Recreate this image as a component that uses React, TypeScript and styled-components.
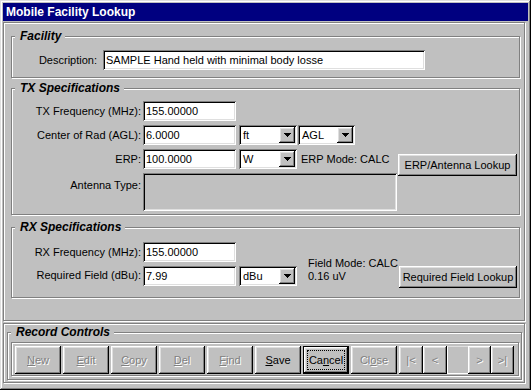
import React from "react";
import styled, { createGlobalStyle, css } from "styled-components";

const GlobalStyle = createGlobalStyle`
  html, body { margin: 0; padding: 0; background: #c0c0c0; }
  body { font-family: "Liberation Sans", Arial, sans-serif; font-size: 11px; color: #000; }
`;

const raised = css`
  box-shadow: inset -1px -1px 0 #000, inset 1px 1px 0 #fff, inset -2px -2px 0 #808080, inset 2px 2px 0 #dfdfdf;
`;

const sunken = css`
  box-shadow: inset 1px 1px 0 #808080, inset -1px -1px 0 #fff, inset 2px 2px 0 #000, inset -2px -2px 0 #dfdfdf;
`;

const etched = css`
  border: 1px solid #808080;
  box-shadow: 1px 1px 0 #fff, inset 1px 1px 0 #fff;
`;

const Window = styled.div`
  width: 531px;
  height: 390px;
  box-sizing: border-box;
  padding: 3px;
  background: #c0c0c0;
  box-shadow: inset -1px -1px 0 #000, inset 1px 1px 0 #dfdfdf, inset -2px -2px 0 #808080, inset 2px 2px 0 #fff;
  display: flex;
  flex-direction: column;
`;

const TitleBar = styled.div`
  height: 18px;
  flex: none;
  background: #000080;
  color: #fff;
  font-weight: bold;
  font-size: 12px;
  padding-left: 3px;
  display: flex;
  align-items: center;
`;

const Panel = styled.div<{ $h: number; $mt: number; $pad: string }>`
  ${etched}
  box-sizing: border-box;
  width: 522px;
  height: ${(p) => p.$h}px;
  margin-top: ${(p) => p.$mt}px;
  padding: ${(p) => p.$pad};
  display: flex;
  flex-direction: column;
  flex: none;
`;

const Group = styled.fieldset<{ $pad: string; $mt?: number }>`
  ${etched}
  margin: ${(p) => p.$mt ?? 0}px 0 0 0;
  padding: ${(p) => p.$pad};
  min-width: 0;
`;

const GroupTitle = styled.legend`
  margin-left: 3px;
  padding: 0 4px 0 5px;
  font: italic bold 12px/14px "Liberation Sans", Arial, sans-serif;
  background: #c0c0c0;
`;

const Row = styled.div<{ $h?: number; $align?: string }>`
  display: flex;
  align-items: ${(p) => p.$align ?? "center"};
  height: ${(p) => p.$h ?? 20}px;
`;

const Rows = styled.div`
  display: flex;
  flex-direction: column;
  gap: 4px;
`;

const Label = styled.div<{ $w: number; $gap: number; $pt?: number }>`
  width: ${(p) => p.$w}px;
  margin-right: ${(p) => p.$gap}px;
  padding-top: ${(p) => p.$pt ?? 0}px;
  text-align: right;
  white-space: nowrap;
  flex: none;
`;

const Field = styled.div<{ $w: number; $h?: number; $disabled?: boolean }>`
  ${sunken}
  box-sizing: border-box;
  width: ${(p) => p.$w}px;
  height: ${(p) => p.$h ?? 20}px;
  background: ${(p) => (p.$disabled ? "#c0c0c0" : "#fff")};
  padding: 3px 3px 0;
  line-height: 14px;
  white-space: nowrap;
  overflow: hidden;
  flex: none;
`;

const SelectBox = styled.div<{ $w: number; $ml: number }>`
  ${sunken}
  box-sizing: border-box;
  width: ${(p) => p.$w}px;
  height: 20px;
  margin-left: ${(p) => p.$ml}px;
  padding: 2px;
  background: #fff;
  display: flex;
  align-items: center;
  flex: none;
`;

const SelectText = styled.span`
  flex: 1;
  padding-left: 2px;
`;

const DropButton = styled.div`
  ${raised}
  width: 16px;
  height: 16px;
  background: #c0c0c0;
  display: flex;
  align-items: center;
  justify-content: center;
`;

const Note = styled.div<{ $ml: number; $mb?: number }>`
  margin-left: ${(p) => p.$ml}px;
  margin-bottom: ${(p) => p.$mb ?? 0}px;
  line-height: 13px;
  white-space: nowrap;
`;

const Button = styled.button<{ $w: number; $h: number; $disabled?: boolean; $default?: boolean }>`
  ${raised}
  box-sizing: border-box;
  width: ${(p) => p.$w}px;
  height: ${(p) => p.$h}px;
  flex: none;
  margin: 0;
  padding: ${(p) => (p.$default ? "3px" : "0")};
  border: ${(p) => (p.$default ? "1px solid #000" : "none")};
  background: #c0c0c0;
  font: 11px "Liberation Sans", Arial, sans-serif;
  color: ${(p) => (p.$disabled ? "#808080" : "#000")};
  text-shadow: ${(p) => (p.$disabled ? "1px 1px 0 #fff" : "none")};
  display: flex;
  align-items: center;
  justify-content: center;
  white-space: nowrap;
`;

const FocusRing = styled.span`
  flex: 1;
  align-self: stretch;
  border: 1px dotted #000;
  display: flex;
  align-items: center;
  justify-content: center;
`;

const SideColumn = styled.div<{ $pt: number }>`
  margin-left: auto;
  padding-top: ${(p) => p.$pt}px;
`;

const TxBody = styled.div`
  display: flex;
`;

const NoteSlot = styled.div`
  align-self: flex-end;
  display: flex;
`;

const ControlBar = styled.div`
  ${etched}
  margin: 3px 2px 0 3px;
  padding: 3px 3px 1px;
  display: flex;
  gap: 2px;
`;

const NavGroup = styled.div`
  display: flex;
`;

const PageBox = styled.div`
  box-sizing: border-box;
  width: 21px;
  height: 28px;
  border-top: 1px solid #dfdfdf;
  border-left: 1px solid #fff;
  border-bottom: 1px solid #fff;
  background: #c0c0c0;
`;

const Arrow = () => (
  <svg width="7" height="4" viewBox="0 0 7 4" shapeRendering="crispEdges">
    <path d="M0 0h7v1h-1v1h-1v1h-1v1h-1v-1h-1v-1h-1v-1h-1z" fill="#000" />
  </svg>
);

const Select = ({ value, w, ml }: { value: string; w: number; ml: number }) => (
  <SelectBox $w={w} $ml={ml}>
    <SelectText>{value}</SelectText>
    <DropButton>
      <Arrow />
    </DropButton>
  </SelectBox>
);

const records = [
  { label: <><u>N</u>ew</>, disabled: true },
  { label: <><u>E</u>dit</>, disabled: true },
  { label: <><u>C</u>opy</>, disabled: true },
  { label: <><u>D</u>el</>, disabled: true },
  { label: <><u>F</u>ind</>, disabled: true },
  { label: <><u>S</u>ave</>, disabled: false },
];

const App = () => {
  return (
    <>
      <GlobalStyle />
      <Window>
        <TitleBar>Mobile Facility Lookup</TitleBar>

        <Panel $h={299} $mt={1} $pad="6px 4px 0 7px">
          <Group $pad="7px 0 7px 0">
            <GroupTitle>Facility</GroupTitle>
            <Row>
              <Label $w={85} $gap={6}>Description:</Label>
              <Field $w={322}>SAMPLE Hand held with minimal body losse</Field>
            </Row>
          </Group>

          <Group $pad="6px 2px 3px 0" $mt={3}>
            <GroupTitle>TX Specifications</GroupTitle>
            <TxBody>
              <Rows>
                <Row>
                  <Label $w={129} $gap={2}>TX Frequency (MHz):</Label>
                  <Field $w={93}>155.00000</Field>
                </Row>
                <Row>
                  <Label $w={129} $gap={2}>Center of Rad (AGL):</Label>
                  <Field $w={93}>6.0000</Field>
                  <Select value="ft" w={58} ml={3} />
                  <Select value="AGL" w={57} ml={1} />
                </Row>
                <Row>
                  <Label $w={129} $gap={2}>ERP:</Label>
                  <Field $w={93}>100.0000</Field>
                  <Select value="W" w={58} ml={3} />
                  <Note $ml={4}>ERP Mode: CALC</Note>
                </Row>
                <Row $h={38} $align="flex-start">
                  <Label $w={129} $gap={2} $pt={6}>Antenna Type:</Label>
                  <Field $w={254} $h={38} $disabled />
                </Row>
              </Rows>
              <SideColumn $pt={53}>
                <Button $w={119} $h={22}>ERP/Antenna Lookup</Button>
              </SideColumn>
            </TxBody>
          </Group>

          <Group $pad="8px 2px 11px 0" $mt={5}>
            <GroupTitle>RX Specifications</GroupTitle>
            <Rows>
              <Row>
                <Label $w={129} $gap={2}>RX Frequency (MHz):</Label>
                <Field $w={93}>155.00000</Field>
              </Row>
              <Row $align="flex-start">
                <Label $w={129} $gap={2} $pt={3}>Required Field (dBu):</Label>
                <Field $w={93}>7.99</Field>
                <Select value="dBu" w={58} ml={3} />
                <NoteSlot>
                  <Note $ml={11} $mb={3}>
                    Field Mode: CALC
                    <br />
                    0.16 uV
                  </Note>
                </NoteSlot>
                <SideColumn $pt={0}>
                  <Button $w={118} $h={22}>Required Field Lookup</Button>
                </SideColumn>
              </Row>
            </Rows>
          </Group>
        </Panel>

        <Panel $h={60} $mt={2} $pad="1px 2px 2px 3px">
          <Group $pad="0 0 3px 0">
            <GroupTitle>Record Controls</GroupTitle>
            <ControlBar>
              {records.map((r, i) => (
                <Button key={i} $w={46} $h={28} $disabled={r.disabled}>
                  {r.label}
                </Button>
              ))}
              <Button $w={46} $h={28} $default>
                <FocusRing>
                  Ca<u>n</u>cel
                </FocusRing>
              </Button>
              <Button $w={46} $h={28} $disabled>
                Cl<u>o</u>se
              </Button>
              <NavGroup>
                <Button $w={24} $h={28} $disabled>|&lt;</Button>
                <Button $w={24} $h={28} $disabled>&lt;</Button>
                <PageBox />
                <Button $w={23} $h={28} $disabled>&gt;</Button>
                <Button $w={23} $h={28} $disabled>&gt;|</Button>
              </NavGroup>
            </ControlBar>
          </Group>
        </Panel>
      </Window>
    </>
  );
};

export default App;
